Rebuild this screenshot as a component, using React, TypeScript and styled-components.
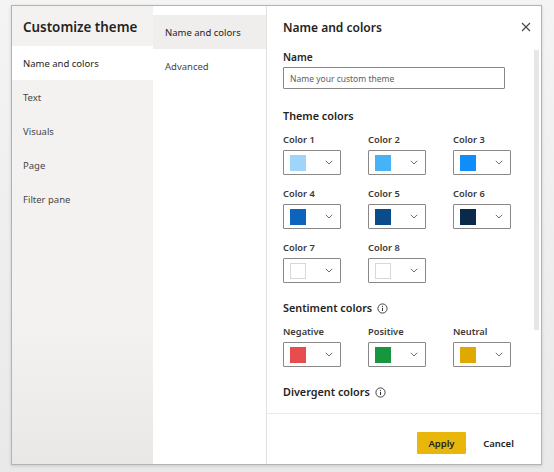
import React from "react";
import styled, { createGlobalStyle } from "styled-components";

const GlobalStyle = createGlobalStyle`
  html, body { margin: 0; padding: 0; }
  body {
    background: #ededed;
    font-family: "Noto Sans", "Open Sans", sans-serif;
    color: #252423;
  }
  * { box-sizing: border-box; }
`;

const Page = styled.div`
  width: 554px;
  height: 472px;
  padding: 5px 12px 7px 11px;
  background: linear-gradient(#f4f4f4, #e9e9e9);
`;

const Dialog = styled.div`
  width: 531px;
  height: 460px;
  border: 1px solid #b3b3b3;
  background: #fff;
  display: grid;
  grid-template-columns: 141px 113px 1fr;
  box-shadow: 0 1px 3px rgba(0, 0, 0, 0.15);
`;

const SidePane = styled.nav`
  background: linear-gradient(#f3f2f1 70%, #e9e8e7);
  display: flex;
  flex-direction: column;
`;

const SideTitle = styled.h1`
  margin: 0;
  height: 40px;
  padding: 11px 0 0 11px;
  font-size: 13.4px;
  line-height: 20px;
  font-weight: 600;
  color: #252423;
`;

const NavItem = styled.div<{ $active?: boolean; $tone?: "white" | "gray"; $pad: number }>`
  height: 34px;
  display: flex;
  align-items: center;
  padding-left: ${(p) => p.$pad}px;
  font-size: 9.5px;
  color: ${(p) => (p.$active ? "#252423" : "#484644")};
  background: ${(p) => (p.$active ? (p.$tone === "white" ? "#ffffff" : "#efeeed") : "transparent")};
`;

const SubPane = styled.nav`
  background: #fff;
  padding-top: 9px;
  display: flex;
  flex-direction: column;
`;

const MainPane = styled.section`
  border-left: 1px solid #e3e1df;
  display: flex;
  flex-direction: column;
  min-height: 0;
`;

const Header = styled.header`
  height: 44px;
  padding: 13px 9px 0 16px;
  display: flex;
  justify-content: space-between;
  align-items: flex-start;
`;

const HeaderTitle = styled.h2`
  margin: 0;
  font-size: 12px;
  line-height: 18px;
  font-weight: 600;
  color: #252423;
`;

const CloseButton = styled.button`
  border: 0;
  background: transparent;
  padding: 0;
  width: 12px;
  height: 12px;
  margin-top: 2px;
  display: flex;
  align-items: center;
  justify-content: center;
  color: #484644;
`;

const Body = styled.div`
  position: relative;
  flex: 1;
  padding: 0 0 0 16px;
  overflow: hidden;
`;

const ScrollThumb = styled.div`
  position: absolute;
  right: 2px;
  top: 0;
  width: 5px;
  height: 280px;
  background: #e6e6e6;
`;

const FieldLabel = styled.div<{ $large?: boolean }>`
  font-size: ${(p) => (p.$large ? "10.2px" : "9.3px")};
  line-height: 14px;
  font-weight: 600;
  color: ${(p) => (p.$large ? "#252423" : "#3b3a39")};
  margin-bottom: 3px;
`;

const TextInput = styled.div`
  width: 222px;
  height: 22px;
  border: 1px solid #8a8886;
  border-radius: 1px;
  padding-left: 6px;
  display: flex;
  align-items: center;
  font-size: 8.5px;
  color: #605e5c;
`;

const SectionTitle = styled.h3<{ $top: number }>`
  margin: ${(p) => p.$top}px 0 9px 0;
  font-size: 10.8px;
  line-height: 16px;
  font-weight: 600;
  color: #252423;
  display: flex;
  align-items: center;
  gap: 5px;
`;

const ColorGrid = styled.div`
  display: grid;
  grid-template-columns: repeat(3, 58px);
  column-gap: 27px;
  row-gap: 12px;
`;

const Field = styled.div`
  display: flex;
  flex-direction: column;
`;

const ColorPicker = styled.div`
  width: 58px;
  height: 25px;
  border: 1px solid #8a8886;
  border-radius: 1px;
  display: flex;
  align-items: center;
  justify-content: space-between;
  padding: 0 7px 0 6px;
`;

const Swatch = styled.span<{ $color: string; $empty?: boolean }>`
  width: 16px;
  height: 16px;
  background: ${(p) => p.$color};
  border: ${(p) => (p.$empty ? "1px solid #d8d8d8" : "none")};
`;

const Footer = styled.footer`
  height: 51px;
  border-top: 1px solid #ebe9e7;
  display: flex;
  align-items: flex-start;
  justify-content: flex-end;
  gap: 8px;
  padding: 18px 18px 0 0;
`;

const Button = styled.button<{ $primary?: boolean }>`
  height: 22px;
  min-width: 49px;
  border: 0;
  border-radius: 1px;
  padding: 0 9px;
  font-family: inherit;
  font-size: 9.5px;
  font-weight: 600;
  color: #252423;
  background: ${(p) => (p.$primary ? "#e9b60c" : "transparent")};
`;

const Chevron = () => (
  <svg width="8" height="5" viewBox="0 0 8 5" fill="none">
    <path d="M0.8 0.8 L4 4 L7.2 0.8" stroke="#605e5c" strokeWidth="0.9" />
  </svg>
);

const InfoIcon = () => (
  <svg width="11" height="11" viewBox="0 0 11 11" fill="none">
    <circle cx="5.5" cy="5.5" r="4.6" stroke="#323130" strokeWidth="0.9" />
    <path d="M5.5 4.8 V8" stroke="#323130" strokeWidth="1" />
    <circle cx="5.5" cy="3.3" r="0.65" fill="#323130" />
  </svg>
);

const CloseIcon = () => (
  <svg width="10" height="10" viewBox="0 0 10 10" fill="none">
    <path d="M1 1 L9 9 M9 1 L1 9" stroke="#484644" strokeWidth="1.1" />
  </svg>
);

type ColorItem = { label: string; color: string; empty?: boolean };

const themeColors: ColorItem[] = [
  { label: "Color 1", color: "#9fd5fb" },
  { label: "Color 2", color: "#48b2f6" },
  { label: "Color 3", color: "#0f8ef8" },
  { label: "Color 4", color: "#0d64bd" },
  { label: "Color 5", color: "#0a4b8c" },
  { label: "Color 6", color: "#0b2a4a" },
  { label: "Color 7", color: "#ffffff", empty: true },
  { label: "Color 8", color: "#ffffff", empty: true },
];

const sentimentColors: ColorItem[] = [
  { label: "Negative", color: "#e84c4f" },
  { label: "Positive", color: "#17963f" },
  { label: "Neutral", color: "#dea902" },
];

const ColorField = ({ item }: { item: ColorItem }) => (
  <Field>
    <FieldLabel>{item.label}</FieldLabel>
    <ColorPicker>
      <Swatch $color={item.color} $empty={item.empty} />
      <Chevron />
    </ColorPicker>
  </Field>
);

export default function App() {
  const sideItems = ["Name and colors", "Text", "Visuals", "Page", "Filter pane"];
  return (
    <>
      <GlobalStyle />
      <Page>
        <Dialog>
          <SidePane>
            <SideTitle>Customize theme</SideTitle>
            {sideItems.map((s, i) => (
              <NavItem key={s} $pad={11} $active={i === 0} $tone="white">
                {s}
              </NavItem>
            ))}
          </SidePane>
          <SubPane>
            <NavItem $pad={12} $active $tone="gray">
              Name and colors
            </NavItem>
            <NavItem $pad={12}>Advanced</NavItem>
          </SubPane>
          <MainPane>
            <Header>
              <HeaderTitle>Name and colors</HeaderTitle>
              <CloseButton aria-label="Close">
                <CloseIcon />
              </CloseButton>
            </Header>
            <Body>
              <ScrollThumb />
              <FieldLabel $large>Name</FieldLabel>
              <TextInput>Name your custom theme</TextInput>
              <SectionTitle $top={19}>Theme colors</SectionTitle>
              <ColorGrid>
                {themeColors.map((c) => (
                  <ColorField key={c.label} item={c} />
                ))}
              </ColorGrid>
              <SectionTitle $top={17}>
                Sentiment colors <InfoIcon />
              </SectionTitle>
              <ColorGrid>
                {sentimentColors.map((c) => (
                  <ColorField key={c.label} item={c} />
                ))}
              </ColorGrid>
              <SectionTitle $top={17}>
                Divergent colors <InfoIcon />
              </SectionTitle>
            </Body>
            <Footer>
              <Button $primary>Apply</Button>
              <Button>Cancel</Button>
            </Footer>
          </MainPane>
        </Dialog>
      </Page>
    </>
  );
}
